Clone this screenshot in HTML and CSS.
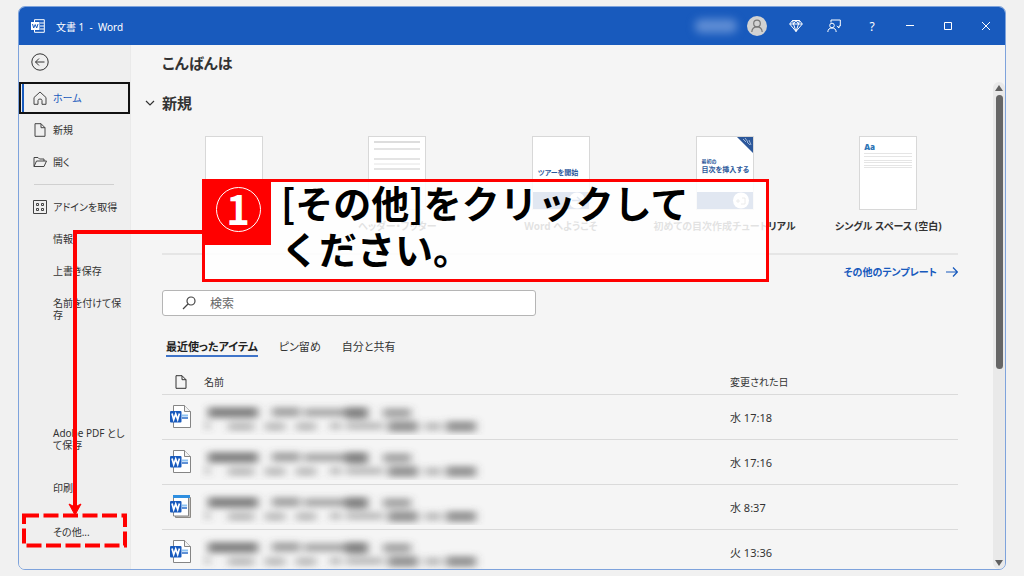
FILE: index.html
```
<!DOCTYPE html>
<html lang="ja">
<head>
<meta charset="utf-8">
<meta name="viewport" content="width=device-width, initial-scale=1">
<title>文書 1 - Word</title>
<link rel="stylesheet" href="styles.css">
</head>
<body>
<svg class="defs" aria-hidden="true">
  <defs>
    <filter id="soft" x="-10%" y="-30%" width="120%" height="160%"><feGaussianBlur stdDeviation="4 3"/></filter>
    <symbol id="doc" viewBox="0 0 21 23">
      <path d="M3.500.500h11l6 6v16h-17z" fill="#fff" stroke="#858585"/>
      <path d="M14.500.500v6h6" fill="#f2f2f2" stroke="#858585"/>
      <path d="M12 10.500h6" stroke="#8fc3f2" stroke-width="2"/><path d="M12 13h6" stroke="#2b6cc8" stroke-width="1.500"/>
      <rect y="6" width="11.500" height="11.500" rx="1" fill="#185abd"/>
      <path d="M2 8.500l1.700 6 2-5.500 2 5.500 1.700-6" fill="none" stroke="#fff" stroke-width="1.700"/>
    </symbol>
    <symbol id="template-doc" viewBox="0 0 21 23">
      <path d="M5.500 2.500h15v20h-15z" fill="#c9c5c0" stroke="#8d8a86"/>
      <path d="M3.500 1.500h15v19.500h-15z" fill="#fff" stroke="#858585"/>
      <path d="M3 0h17v3H3z" fill="#2f8fe0"/>
      <path d="M12 10.500h5" stroke="#8fc3f2" stroke-width="2"/><path d="M12 13h5" stroke="#2b6cc8" stroke-width="1.500"/>
      <rect y="6" width="11.500" height="11.500" rx="1" fill="#185abd"/>
      <path d="M2 8.500l1.700 6 2-5.500 2 5.500 1.700-6" fill="none" stroke="#fff" stroke-width="1.700"/>
    </symbol>
    <symbol id="hidden-name" viewBox="0 0 290 36">
      <g filter="url(#soft)" fill="#555">
        <path d="M8 8h50v11H8z" opacity=".7"/><path d="M72 8h28v10H72z" opacity=".5"/>
        <path d="M104 9h44v9h-44z" opacity=".45"/><path d="M146 8h22v12h-22z" opacity=".7"/>
        <path d="M183 9h28v10h-28z" opacity=".5"/>
        <path d="M5 22h5v9H5zM28 23h26v9H28zM65 23h20v9H65zM96 23h20v9H96zM130 23h11v8h-11zM146 23h37v8h-37z" opacity=".35"/>
        <path d="M188 22h30v11h-30zM246 22h30v11h-30z" opacity=".6"/><path d="M225 23h16v9h-16z" opacity=".35"/>
      </g>
    </symbol>
    <symbol id="page" viewBox="0 0 12 14"><path d="M1 .7h6l4 4v8.600H1zM7 .7v4h4" fill="none" stroke="currentColor"/></symbol>
  </defs>
</svg>

<div class="window">
  <header class="titlebar">
    <svg class="app-icon" viewBox="0 0 14 14" fill="none" stroke="#fff"><path d="M3.500 3V.7h9.800v12.600H3.500V11M9 4h4M9 7h4M9 10h4"/><rect x="0" y="3" width="8.500" height="8" fill="#fff" stroke="none"/><path d="M1.500 5l1.200 4 1.500-3.500L5.700 9 7 5" stroke="#185abd"/></svg>
    <h1 class="title">文書 1&nbsp; - &nbsp;Word</h1>
    <span class="user-name"></span>
    <button class="avatar" aria-label="アカウント"><svg viewBox="0 0 20 20" fill="none" stroke="#777" stroke-width="1.200"><circle cx="10" cy="7.500" r="3.300"/><path d="M4.800 16c.2-3.500 2-5.200 5.200-5.200s5 1.700 5.200 5.200"/></svg></button>
    <div class="controls">
      <button aria-label="プレミアム"><svg viewBox="0 0 14 14" fill="none" stroke="#fff"><path d="M3.500 1.500h7L13.300 5 7 12.500.7 5zM.7 5h12.600M3.500 1.500l1 3.500L7 12.500 9.500 5l1-3.500M4.500 5L7 1.500 9.500 5"/></svg></button>
      <button aria-label="フィードバック"><svg viewBox="0 0 14 14" fill="none" stroke="#fff"><path d="M4 3.500V1h9.300v6H12v2L9.800 7"/><circle cx="5" cy="6.500" r="2.300"/><path d="M.8 13c.2-2.700 1.600-4 4.200-4s4 1.300 4.200 4"/></svg></button>
      <button aria-label="ヘルプ" class="help">?</button>
      <button aria-label="最小化"><svg viewBox="0 0 14 14" fill="none" stroke="#fff"><path d="M3 6.500h8"/></svg></button>
      <button aria-label="最大化"><svg viewBox="0 0 14 14" fill="none" stroke="#fff"><path d="M3.500 3.500h7v7h-7z"/></svg></button>
      <button aria-label="閉じる"><svg viewBox="0 0 14 14" fill="none" stroke="#fff"><path d="M3 3l8 8M11 3l-8 8"/></svg></button>
    </div>
  </header>

  <div class="body">
    <nav class="sidebar">
      <button class="back" aria-label="戻る"><svg viewBox="0 0 18 18" fill="none" stroke="currentColor"><circle cx="9" cy="9" r="8.200"/><path d="M13.500 9h-9M8 5.500L4.500 9 8 12.500"/></svg></button>
      <button class="item active"><svg viewBox="0 0 14 14" fill="none" stroke="currentColor"><path d="M1 6.500L7 1l6 5.500v6.800H9V9.500Q9 8 7 8T5 9.500v3.800H1z"/></svg>ホーム</button>
      <button class="item"><svg viewBox="0 0 12 14"><use href="#page"/></svg>新規</button>
      <button class="item"><svg viewBox="0 0 14 14" fill="none" stroke="currentColor"><path d="M1 11.500V2.500h4l1.500 1.500H11v2M1 11.500L3.500 6h10L11 11.500z"/></svg>開く</button>
      <hr class="rule">
      <button class="item"><svg viewBox="0 0 14 14" fill="none" stroke="currentColor"><path d="M.5.500h13v13H.5zM3.500 3.500h2v2h-2zM8.500 3.500h2v2h-2zM3.500 8.500h2v2h-2zM8.500 8.500h2v2h-2z"/></svg>アドインを取得</button>
      <button class="item text">情報</button>
      <button class="item text">上書き保存</button>
      <button class="item text">名前を付けて保存</button>
      <div class="bottom">
        <button class="item text">Adobe PDF として保存</button>
        <button class="item text">印刷</button>
        <button class="item text">その他...</button>
      </div>
    </nav>

    <main class="main">
      <h2 class="greeting">こんばんは</h2>
      <div class="scroller">
        <div class="content">
          <h3 class="section"><svg viewBox="0 0 10 10" fill="none" stroke="currentColor" stroke-width="1.200"><path d="M1 3l4 4 4-4"/></svg>新規</h3>
          <div class="templates">
            <button class="card" aria-label="白紙の文書"><span class="thumb"></span></button>
            <button class="card"><span class="thumb"><svg viewBox="0 0 56 72" stroke="#e4e4e4" stroke-width="2"><path d="M5 5h46" stroke="#bbb" stroke-width="1"/><path d="M5 12h46M5 22h46M5 32h46"/><path d="M5 27h46" stroke-width="1"/></svg></span><span>ヘッダー・フッター</span></button>
            <button class="card"><span class="thumb tour"><span>ツアーを開始</span><svg class="band" viewBox="0 0 56 17"><path d="M0 0h56v17H0z" fill="#2b579a"/><circle cx="44" cy="8.500" r="8" fill="#fff"/><path d="M39 8.500h8M44 5l4 3.500-4 3.500" fill="none" stroke="#2b579a" stroke-width="1.500"/></svg></span><span>Word へようこそ</span></button>
            <button class="card"><span class="thumb toc"><svg class="ribbon" viewBox="0 0 16 16"><path d="M0 0h16v16z" fill="#2b579a"/><path d="M6 2l3 3M8 1l3 4M10 5l3 3M12 3l2 5" stroke="#9cb4d8" stroke-width="1"/></svg><small>最初の</small><span>目次を挿入する</span><svg class="band" viewBox="0 0 56 17"><path d="M0 0h56v17H0z" fill="#2b579a"/><circle cx="44" cy="8.500" r="8" fill="#fff"/><path d="M39 9h4M41 7v4M45 6h3v6h-4" fill="none" stroke="#777"/></svg></span><span>初めての目次作成チュートリアル</span></button>
            <button class="card"><span class="thumb single"><b>Aa</b><svg viewBox="0 0 56 54" stroke="#e5e5e5" stroke-width="1"><path d="M4 .5h48M4 3.500h48M4 7.500h48M4 9.500h48M4 12.500h48M4 14.500h48"/></svg></span><span>シングル スペース (空白)</span></button>
          </div>
          <div class="more"><a href="#templates">その他のテンプレート<svg viewBox="0 0 12 12" fill="none" stroke="currentColor" stroke-width="1.200"><path d="M0 6h11M7 1.500L11.300 6 7 10.500"/></svg></a></div>
          <label class="search"><svg viewBox="0 0 14 14" fill="none" stroke="#444" stroke-width="1.200"><circle cx="9" cy="5" r="4"/><path d="M6 8l-5 5"/></svg><input type="search" placeholder="検索" aria-label="検索"></label>
          <div class="tabs">
            <button class="tab selected">最近使ったアイテム</button>
            <button class="tab">ピン留め</button>
            <button class="tab">自分と共有</button>
          </div>
          <table class="files">
            <thead><tr><th class="type"><svg viewBox="0 0 12 14"><use href="#page"/></svg></th><th>名前</th><th class="date">変更された日</th></tr></thead>
            <tbody>
              <tr><td><svg class="file" viewBox="0 0 21 23"><use href="#doc"/></svg></td><td><svg class="redacted" viewBox="0 0 290 36"><use href="#hidden-name"/></svg></td><td>水 17:18</td></tr>
              <tr><td><svg class="file" viewBox="0 0 21 23"><use href="#doc"/></svg></td><td><svg class="redacted" viewBox="0 0 290 36"><use href="#hidden-name"/></svg></td><td>水 17:16</td></tr>
              <tr><td><svg class="file" viewBox="0 0 21 23"><use href="#template-doc"/></svg></td><td><svg class="redacted" viewBox="0 0 290 36"><use href="#hidden-name"/></svg></td><td>水 8:37</td></tr>
              <tr><td><svg class="file" viewBox="0 0 21 23"><use href="#doc"/></svg></td><td><svg class="redacted" viewBox="0 0 290 36"><use href="#hidden-name"/></svg></td><td>火 13:36</td></tr>
            </tbody>
          </table>
        </div>
        <div class="scrollbar">
          <svg viewBox="0 0 8 6"><path d="M4 0l4 6H0z" fill="#606060"/></svg>
          <span class="handle"></span>
          <svg class="down" viewBox="0 0 8 6"><path d="M4 6l4-6H0z" fill="#606060"/></svg>
        </div>
      </div>
    </main>
  </div>
</div>

<svg class="pointer" viewBox="0 0 190 330" fill="none" stroke="#f00" aria-hidden="true">
  <path d="M184 3H57v278" stroke-width="4"/>
  <path d="M51 275l6 3 6-3-6 11z" fill="#f00" stroke-width="1"/>
  <path d="M6 286.500h101v30H6z" stroke-width="4" stroke-dasharray="15 4.500"/>
</svg>
<aside class="callout">
  <span class="number"><span>1</span></span>
  <p>[その他]をクリックして<br>ください。</p>
</aside>
</body>
</html>
```
FILE: styles.css
```
* { box-sizing: border-box; }
body {
  margin: 0;
  height: 100vh;
  padding: 6px 18px;
  position: relative;
  overflow: hidden;
  background: #f1f1f1;
  color: #333;
  font-family: "Noto Sans", "Noto Sans CJK JP", sans-serif;
  font-size: 10px;
  font-feature-settings: "palt";
}
button { font: inherit; font-feature-settings: inherit; color: inherit; border: 0; background: none; padding: 0; }
h1, h2, h3, p { margin: 0; }
svg { display: block; flex: none; }
.defs { position: absolute; width: 0; height: 0; }

.window {
  height: 100%;
  display: flex;
  flex-direction: column;
  border: 1px solid #7ea3dc;
  border-radius: 7px;
  overflow: hidden;
  background: #f5f5f5;
}
.titlebar {
  flex: none;
  height: 38px;
  display: flex;
  align-items: center;
  padding-left: 12px;
  background: #185abd;
  color: #fff;
}
.app-icon { width: 14px; height: 14px; margin-right: 11px; }
.title { font-size: 10px; font-weight: 400; flex: 1; }
.user-name { width: 42px; height: 14px; margin-right: 10px; border-radius: 6px; background: #5f8dd4; filter: blur(4px); }
.avatar { width: 20px; height: 20px; border-radius: 50%; background: #d2d2d2; }
.controls { display: flex; margin-left: 10px; }
.controls button { width: 38px; height: 38px; display: grid; place-items: center; }
.controls svg { width: 14px; height: 14px; }
.help { font-size: 12px; }

.body { flex: 1; min-height: 0; display: flex; }
.sidebar {
  width: 112px;
  flex: none;
  display: flex;
  flex-direction: column;
  padding: 8px 0 15px;
  background: #efefef;
  border-right: 1px solid #eaeaea;
}
.back { width: 18px; height: 18px; margin: 0 0 11px 12px; }
.item {
  min-height: 32px;
  display: flex;
  align-items: center;
  gap: 6px;
  padding: 0 8px 0 14px;
  line-height: 12px;
  text-align: left;
}
.item svg { width: 14px; height: 14px; color: #444; }
.item.active { border: 2px solid #111; padding-left: 12px; box-shadow: inset 1px 0 #efefef, inset 3px 0 #185abd; color: #185abd; }
.item.text { padding: 10px 8px 10px 34px; }
.rule { width: 80px; margin: 6px 0 6px 15px; border: 0; border-top: 1px solid #d0d0d0; }
.bottom { display: grid; grid-template-rows: 54px 44px 44px; margin-top: auto; }
.bottom .item.text { padding: 0 2px 0 34px; }

.main { flex: 1; min-width: 0; display: flex; flex-direction: column; }
.greeting { height: 37px; padding: 8px 0 0 31px; font-size: 15px; line-height: 20px; }
.scroller { flex: 1; min-height: 0; display: flex; }
.content { flex: 1; min-width: 0; padding: 11px 35px 0 31px; overflow: hidden; }
.section { display: flex; align-items: center; gap: 7px; margin-left: -17px; font-size: 15px; line-height: 20px; }
.section svg { width: 10px; height: 10px; }
.templates { display: grid; grid-template-columns: repeat(5, 1fr); margin: 23px -12px 19px -10px; }
.card { height: 98px; display: flex; flex-direction: column; align-items: center; gap: 8px; font-size: 10px; line-height: 16px; font-weight: 700; white-space: nowrap; }
.thumb {
  flex: none;
  width: 58px;
  height: 74px;
  display: flex;
  flex-direction: column;
  position: relative;
  border: 1px solid #d8d8d8;
  background: #fff;
  color: #2b579a;
  font-size: 7px;
  line-height: 9px;
  text-align: left;
}
.tour { padding-top: 31px; }
.tour > span, .toc > span, .toc > small { padding-left: 5px; }
.toc { padding-top: 20px; }
.toc small { font-size: 5px; line-height: 8px; }
.thumb .band { margin-top: auto; width: 56px; height: 17px; }
.ribbon { position: absolute; top: 0; right: 0; width: 16px; height: 16px; }
.single b { padding: 5px 0 2px 4px; color: #2e75b6; font-size: 8px; }
.more { display: flex; justify-content: flex-end; padding-top: 9px; border-top: 2px solid #e5e5e5; }
.more a { display: flex; align-items: center; gap: 9px; color: #185abd; font-size: 10px; line-height: 16px; font-weight: 700; text-decoration: none; }
.more svg { width: 12px; height: 12px; }
.search {
  display: flex;
  align-items: center;
  width: 47%;
  height: 26px;
  margin-top: 10px;
  padding-left: 19px;
  gap: 14px;
  border: 1px solid #b5b5b5;
  border-radius: 3px;
  background: #fff;
}
.search svg { width: 14px; height: 14px; }
.search input { flex: 1; min-width: 0; border: 0; padding: 0; outline: 0; background: none; font: inherit; font-size: 12px; }
.search input::placeholder { color: #666; opacity: 1; }
.tabs { display: flex; gap: 21px; margin: 22px 0 13px 4px; }
.tab { padding-top: 1px; border-bottom: 2px solid transparent; font-size: 11px; line-height: 16px; }
.tab.selected { border-color: #3f74c9; font-weight: 700; color: #222; }

.files { width: 100%; table-layout: fixed; border-collapse: collapse; }
.files th { height: 24px; padding: 0; font-weight: 400; text-align: left; border-bottom: 1px solid #dadada; }
.files td { height: 45px; padding: 0; border-bottom: 1px solid #dadada; font-size: 11px; }
.files .type { width: 42px; padding-left: 13px; }
.type svg { width: 12px; height: 14px; }
.files .date { width: 228px; }
.file { width: 21px; height: 23px; margin-left: 8px; }
.redacted { width: 290px; height: 36px; margin-left: -4px; }

.scrollbar { flex: none; width: 12px; display: flex; flex-direction: column; align-items: center; padding: 3px 0; border-radius: 6px; background: #e9e9e9; }
.scrollbar svg { width: 8px; height: 6px; }
.handle { width: 7px; height: 57%; margin-top: 4px; border-radius: 4px; background: #666; }
.scrollbar .down { margin-top: auto; }

.pointer { position: absolute; left: 18px; top: 229px; width: 190px; height: 330px; }
.callout {
  position: absolute;
  left: 202px;
  top: 179px;
  width: 567px;
  height: 103px;
  display: flex;
  align-items: flex-start;
  gap: 10px;
  border: 3px solid #f00;
  background: rgba(255, 255, 255, .86);
  color: #000;
}
.number { width: 66px; height: 63px; flex: none; display: flex; justify-content: center; padding-top: 5px; background: #f00; }
.number span { width: 45px; height: 45px; border: 1px solid #fff; border-radius: 50%; color: #fff; font-family: "Noto Sans CJK JP", sans-serif; font-size: 40px; line-height: 40px; font-weight: 700; text-align: center; }
.callout p { margin-top: -3px; font-family: "Noto Sans CJK JP", sans-serif; font-feature-settings: normal; font-size: 38px; line-height: 46px; font-weight: 700; }
```
